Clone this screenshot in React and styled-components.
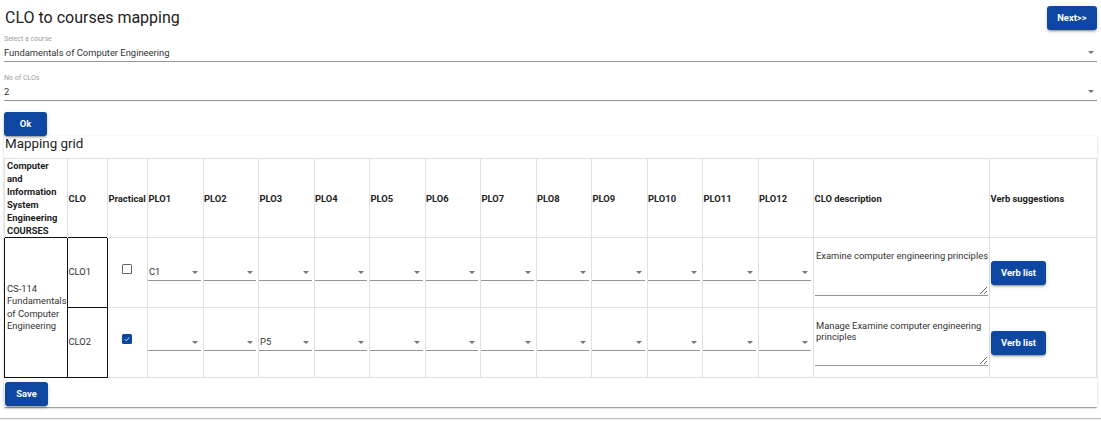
import React from 'react';
import styled, { createGlobalStyle } from 'styled-components';

const GlobalStyle = createGlobalStyle`
  * {
    box-sizing: border-box;
  }

  body {
    margin: 0;
    background: #fff;
    font-family: Roboto, "Liberation Sans", Arial, sans-serif;
    color: rgba(0, 0, 0, 0.87);
  }
`;

const Page = styled.div`
  padding: 0 4px;
`;

const TopBar = styled.div`
  display: flex;
  align-items: center;
  justify-content: space-between;
  padding-top: 6px;
  height: 30px;
`;

const Title = styled.h1`
  margin: 0;
  padding-left: 1px;
  font-size: 16px;
  font-weight: 400;
  line-height: 24px;
  color: #222;
`;

const Button = styled.button`
  display: inline-flex;
  align-items: center;
  justify-content: center;
  height: 24px;
  min-width: 43px;
  padding: 0 10.5px;
  border: none;
  border-radius: 3px;
  background: #0d47a1;
  color: #fff;
  font-family: Roboto, "Liberation Sans", Arial, sans-serif;
  font-size: 9.4px;
  font-weight: 700;
  line-height: 1;
  cursor: pointer;
  box-shadow: 0 3px 1px -2px rgba(0, 0, 0, 0.2), 0 2px 2px 0 rgba(0, 0, 0, 0.14),
    0 1px 5px 0 rgba(0, 0, 0, 0.12);
`;

const Field = styled.div`
  margin-top: ${p => p.$top}px;
`;

const FieldLabel = styled.div`
  font-size: 7px;
  line-height: 9px;
  color: #9e9e9e;
  margin-bottom: 3px;
`;

const SelectBox = styled.div`
  display: flex;
  align-items: center;
  justify-content: space-between;
  height: ${p => p.$h}px;
  padding: 0 3px ${p => p.$pb}px ${p => p.$pl}px;
  border-bottom: 1px solid rgba(0, 0, 0, 0.42);
  font-size: 9.4px;
  line-height: 12px;
  color: #333;
`;

const Caret = styled.span`
  flex: none;
  width: 0;
  height: 0;
  border-left: 3px solid transparent;
  border-right: 3px solid transparent;
  border-top: 3px solid #757575;
`;

const OkRow = styled.div`
  margin-top: 11px;
  display: flex;
`;

const Paper = styled.div`
  background: #fff;
  padding-bottom: 1px;
  box-shadow: 0 2px 1px -1px rgba(0, 0, 0, 0.2), 0 1px 1px 0 rgba(0, 0, 0, 0.14),
    0 1px 3px 0 rgba(0, 0, 0, 0.12);
`;

const GridTitle = styled.h6`
  margin: 0 0 7px;
  padding-left: 1px;
  font-size: 13.4px;
  font-weight: 400;
  line-height: 15px;
  color: #222;
`;

const Table = styled.table`
  width: 100%;
  table-layout: fixed;
  border-collapse: collapse;
  font-size: 9.4px;
  line-height: 12.5px;
`;

const Th = styled.th`
  padding: 0 1px 0 ${p => (p.$first ? 2 : 0.5)}px;
  border: 1px solid #e0e0e0;
  border-bottom-style: ${p => (p.$open ? 'none' : 'solid')};
  text-align: left;
  vertical-align: middle;
  font-weight: 700;
  line-height: 13px;
  color: #222;
`;

const Td = styled.td`
  height: 70px;
  padding: 0 ${p => (p.$padR != null ? p.$padR : 1)}px 0 ${p => (p.$padL != null ? p.$padL : 1)}px;
  border: 1px solid ${p => (p.$dark ? '#111' : '#e0e0e0')};
  text-align: left;
  vertical-align: middle;
  color: #333;
`;

const CheckWrap = styled.div`
  display: flex;
  justify-content: center;
  padding: 0 1px 7px 0;
`;

const Check = styled.span`
  display: inline-flex;
  align-items: center;
  justify-content: center;
  width: 10.5px;
  height: 10.5px;
  border-radius: 1.5px;
  border: ${p => (p.$checked ? 'none' : '1.3px solid rgba(0, 0, 0, 0.6)')};
  background: ${p => (p.$checked ? '#0d47a1' : '#fff')};
`;

const Desc = styled.textarea`
  display: block;
  width: 100%;
  height: 46px;
  margin: 0;
  padding: 0 0 0 1px;
  border: none;
  border-bottom: 1px solid rgba(0, 0, 0, 0.42);
  outline: none;
  background: transparent;
  font-family: Roboto, "Liberation Sans", Arial, sans-serif;
  font-size: 9.4px;
  line-height: 11px;
  color: #333;
`;

const SaveRow = styled.div`
  margin-top: 4px;
  padding-left: 1px;
  display: flex;
`;

const Footer = styled.div`
  margin-top: 11px;
  height: 2px;
  border-top: 1px solid #c4c4c4;
  background: #ececec;
`;

const TopSelect = ({ label, value, top }) => (
  <Field $top={top}>
    <FieldLabel>{label}</FieldLabel>
    <SelectBox $h={15} $pb={3} $pl={0}>
      <span>{value}</span>
      <Caret />
    </SelectBox>
  </Field>
);

const CellSelect = ({ value }) => (
  <SelectBox $h={16} $pb={0} $pl={1}>
    <span>{value}</span>
    <Caret />
  </SelectBox>
);

const Checkbox = ({ checked }) => (
  <CheckWrap>
    <Check $checked={checked}>
      {checked && (
        <svg width="8" height="8" viewBox="0 0 24 24" aria-hidden="true">
          <path d="M5 12.5l4.5 4.5L19 7.5" fill="none" stroke="#fff" strokeWidth="2.4" />
        </svg>
      )}
    </Check>
  </CheckWrap>
);

const plos = Array.from({ length: 12 }, (_, i) => `PLO${i + 1}`);

const rows = [
  {
    clo: 'CLO1',
    practical: false,
    values: { 0: 'C1' },
    desc: 'Examine computer engineering principles',
  },
  {
    clo: 'CLO2',
    practical: true,
    values: { 2: 'P5' },
    desc: 'Manage Examine computer engineering principles',
  },
];

export default function App() {
  return (
    <>
      <GlobalStyle />
      <Page>
        <TopBar>
          <Title>CLO to courses mapping</Title>
          <Button>Next&gt;&gt;</Button>
        </TopBar>

        <TopSelect label="Select a course" value="Fundamentals of Computer Engineering" top={5} />
        <TopSelect label="No of CLOs" value="2" top={12} />

        <OkRow>
          <Button>Ok</Button>
        </OkRow>

        <Paper>
          <GridTitle>Mapping grid</GridTitle>
          <Table>
            <colgroup>
              <col style={{ width: 63 }} />
              <col style={{ width: 40 }} />
              <col style={{ width: 40 }} />
              {plos.map(p => (
                <col key={p} style={{ width: 55.5 }} />
              ))}
              <col style={{ width: 176 }} />
              <col />
            </colgroup>
            <thead>
              <tr>
                <Th $first $open>
                  Computer and Information System Engineering COURSES
                </Th>
                <Th $open>CLO</Th>
                <Th>Practical</Th>
                {plos.map(p => (
                  <Th key={p}>{p}</Th>
                ))}
                <Th>CLO description</Th>
                <Th>Verb suggestions</Th>
              </tr>
            </thead>
            <tbody>
              {rows.map((row, r) => (
                <tr key={row.clo}>
                  {r === 0 && (
                    <Td $dark $padL={2} rowSpan={2}>
                      CS-114 Fundamentals of Computer Engineering
                    </Td>
                  )}
                  <Td $dark $padL={0.5}>{row.clo}</Td>
                  <Td>
                    <Checkbox checked={row.practical} />
                  </Td>
                  {plos.map((p, i) => (
                    <Td key={p} $padL={0} $padR={2}>
                      <CellSelect value={row.values[i] || ''} />
                    </Td>
                  ))}
                  <Td>
                    <Desc defaultValue={row.desc} />
                  </Td>
                  <Td $padL={0.5}>
                    <Button>Verb list</Button>
                  </Td>
                </tr>
              ))}
            </tbody>
          </Table>
          <SaveRow>
            <Button>Save</Button>
          </SaveRow>
        </Paper>
      </Page>
      <Footer />
    </>
  );
}
